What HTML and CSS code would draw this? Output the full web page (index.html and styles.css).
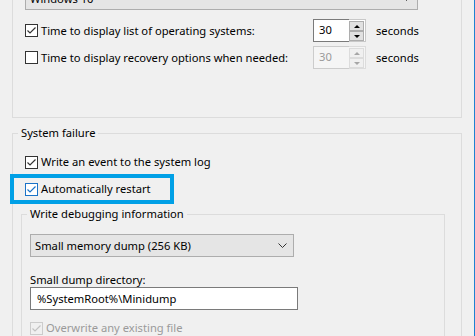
FILE: index.html
```html
<!DOCTYPE html>
<html>
<head>
<meta charset="utf-8">
<link rel="stylesheet" href="styles.css">
</head>
<body>
<div class="window">
  <fieldset class="group upper">
    <div class="combo combo-os">
      <span class="combo-text">Windows 10</span>
      <svg class="chev" width="9" height="6" viewBox="0 0 9 6"><polyline points="0.5,0.5 4.5,4.5 8.5,0.5" fill="none" stroke="#333" stroke-width="1"/></svg>
    </div>
    <div class="time-grid">
      <label class="check">
        <span class="box"><svg width="11" height="11" viewBox="0 0 11 11"><polyline points="1.5,5.5 4,8 9.5,2.5" fill="none" stroke="#333" stroke-width="1.2"/></svg></span>
        <span>Time to display list of operating systems:</span>
      </label>
      <div class="spin">
        <div class="spin-edit">30</div>
        <div class="spin-btns">
          <span class="sbtn"><i class="tri up"></i></span>
          <span class="sbtn"><i class="tri down"></i></span>
        </div>
      </div>
      <span class="unit">seconds</span>

      <label class="check">
        <span class="box"></span>
        <span>Time to display recovery options when needed:</span>
      </label>
      <div class="spin disabled">
        <div class="spin-edit">30</div>
        <div class="spin-btns">
          <span class="sbtn"><i class="tri up"></i></span>
          <span class="sbtn"><i class="tri down"></i></span>
        </div>
      </div>
      <span class="unit">seconds</span>
    </div>
  </fieldset>

  <fieldset class="group failure">
    <legend class="legend">System failure</legend>
    <label class="check row-event">
      <span class="box"><svg width="11" height="11" viewBox="0 0 11 11"><polyline points="1.5,5.5 4,8 9.5,2.5" fill="none" stroke="#333" stroke-width="1.2"/></svg></span>
      <span>Write an event to the system log</span>
    </label>
    <div class="highlight">
      <label class="check">
        <span class="box focus"><svg width="11" height="11" viewBox="0 0 11 11"><polyline points="1.5,5.5 4,8 9.5,2.5" fill="none" stroke="#1a73c8" stroke-width="1.2"/></svg></span>
        <span>Automatically restart</span>
      </label>
    </div>

    <fieldset class="group debug">
      <legend class="legend">Write debugging information</legend>
      <div class="combo combo-dump">
        <span class="combo-text">Small memory dump (256 KB)</span>
        <svg class="chev" width="9" height="6" viewBox="0 0 9 6"><polyline points="0.5,0.5 4.5,4.5 8.5,0.5" fill="none" stroke="#333" stroke-width="1"/></svg>
      </div>
      <div class="field-label">Small dump directory:</div>
      <div class="textbox">%SystemRoot%\Minidump</div>
      <label class="check disabled-check">
        <span class="box dis"><svg width="11" height="11" viewBox="0 0 11 11"><polyline points="1.5,5.5 4,8 9.5,2.5" fill="none" stroke="#c2c2c2" stroke-width="1.2"/></svg></span>
        <span>Overwrite any existing file</span>
      </label>
    </fieldset>
  </fieldset>
</div>
</body>
</html>
```

FILE: styles.css
```css
* { box-sizing: border-box; }
html, body { margin: 0; padding: 0; }
body {
  background: #f0f0f0;
  font-family: "Noto Sans", "Open Sans", sans-serif;
  font-size: 11.2px;
  color: #000;
}
.window {
  width: 475px;
  height: 336px;
  overflow: hidden;
  display: flex;
  flex-direction: column;
  padding: 0 12px;
  border-right: 1px solid #1e82d2;
}
.group {
  margin: 0;
  min-width: 0;
  border: 1px solid #dcdcdc;
}
.upper {
  width: 450px;
  margin-top: -40px;
  padding: 26px 12px 48px 12px;
}
.combo {
  display: flex;
  align-items: center;
  justify-content: space-between;
  height: 23px;
  background: #e5e5e5;
  border: 1px solid #adadad;
  padding: 0 6px 0 4px;
}
.combo-os { width: 393px; }
.combo-dump { width: 264px; }
.chev { flex: none; }
.time-grid {
  margin-top: 9px;
  display: grid;
  grid-template-columns: 288px 53px auto;
  grid-auto-rows: 23px;
  row-gap: 4px;
  align-items: center;
}
.check {
  display: flex;
  align-items: center;
  gap: 3px;
  line-height: 16px;
  white-space: nowrap;
}
.box {
  width: 13px;
  height: 13px;
  flex: none;
  border: 1px solid #333;
  background: #fff;
  display: flex;
}
.box.focus { border-color: #1a73c8; }
.box.dis { border-color: #cccccc; background: #f0f0f0; }
.spin {
  display: flex;
  height: 23px;
  width: 53px;
}
.spin-edit {
  width: 36px;
  background: #fff;
  border: 1px solid #7a7a7a;
  border-right: none;
  padding-left: 5px;
  line-height: 20px;
}
.spin-btns {
  width: 17px;
  border: 1px solid #c8c8c8;
  border-left: none;
  background: #fff;
  padding: 1px 1px 0 0;
  display: flex;
  flex-direction: column;
}
.sbtn {
  height: 10px;
  background: #e1e1e1;
  border: 1px solid #adadad;
  display: flex;
  align-items: center;
  justify-content: center;
}
.tri {
  width: 0; height: 0;
  border-left: 3px solid transparent;
  border-right: 3px solid transparent;
}
.tri.up { border-bottom: 3px solid #000; }
.tri.down { border-top: 3px solid #000; }
.spin.disabled .spin-edit { background: #f5f5f5; border-color: #cccccc; color: #9a9a9a; }
.spin.disabled .spin-btns { border-color: #dcdcdc; background: #f5f5f5; }
.spin.disabled .sbtn { background: #f0f0f0; border-color: #dcdcdc; }
.spin.disabled .tri.up { border-bottom-color: #a6a6a6; }
.spin.disabled .tri.down { border-top-color: #a6a6a6; }
.unit { padding-left: 10px; }

.failure {
  width: 450px;
  margin-top: 7px;
  padding: 13px 8px 0 8px;
}
.legend {
  padding: 0 3px;
  line-height: 16px;
}
.failure > .legend { margin-left: -3px; }
.row-event { padding-left: 4px; }
.highlight {
  width: 164px;
  height: 30px;
  margin: 4px 0 0 -11px;
  border: 4px solid #00a0e6;
  padding-left: 11px;
  display: flex;
  align-items: center;
}
.debug {
  width: 424px;
  margin-top: 2px;
  padding: 12px 8px 20px 8px;
}
.debug > .legend { margin-left: -3px; }
.field-label {
  margin-top: 16px;
  line-height: 14px;
}
.textbox {
  width: 268px;
  height: 23px;
  background: #fff;
  border: 1px solid #7a7a7a;
  padding-left: 6px;
  line-height: 21px;
}
.disabled-check {
  margin-top: 10px;
  color: #9a9a9a;
}
```
